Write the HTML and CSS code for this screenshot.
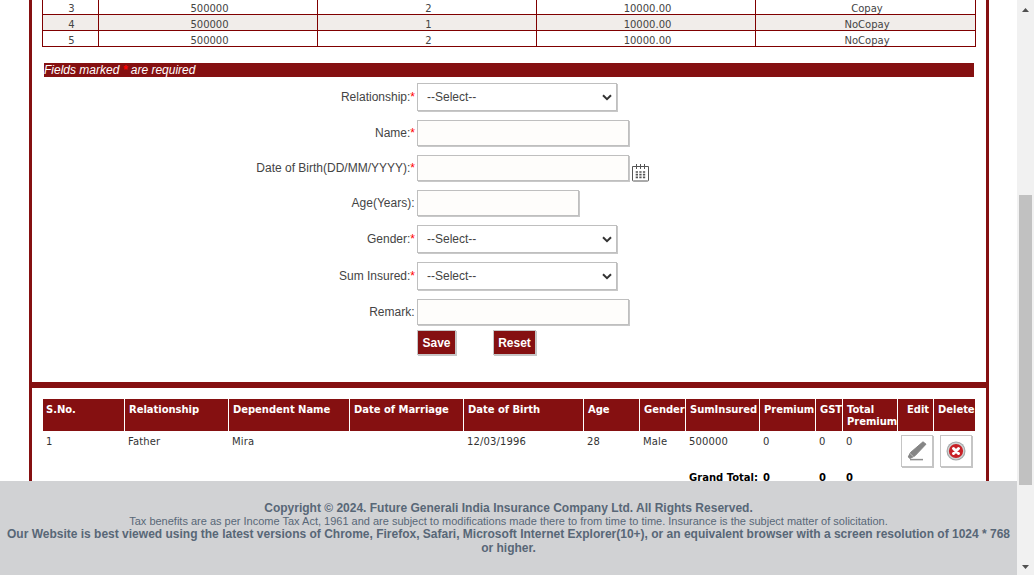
FILE: index.html
```html
<!DOCTYPE html>
<html lang="en">
<head>
<meta charset="utf-8">
<title>Dependent Details</title>
<link rel="stylesheet" href="styles.css">
</head>
<body>
<div class="window">
  <div class="page">
    <main class="panel">
      <section class="entry">
        <div class="plans">
          <div class="plan"><span>3</span><span>500000</span><span>2</span><span>10000.00</span><span>Copay</span></div>
          <div class="plan alt"><span>4</span><span>500000</span><span>1</span><span>10000.00</span><span>NoCopay</span></div>
          <div class="plan"><span>5</span><span>500000</span><span>2</span><span>10000.00</span><span>NoCopay</span></div>
        </div>
        <p class="note">Fields marked <b class="star">*</b> are required</p>
        <form class="form">
          <div class="row tall"><label>Relationship:<i>*</i></label><div class="select"><span>--Select--</span><svg width="10" height="7" viewBox="0 0 10 7"><path d="M1 1.3L5 5.2L9 1.3"/></svg></div></div>
          <div class="row"><label>Name:<i>*</i></label><div class="input"></div></div>
          <div class="row"><label>Date of Birth(DD/MM/YYYY):<i>*</i></label><div class="input"></div>
            <svg class="cal" width="17" height="18" viewBox="0 0 17 18"><path d="M.5 2.500h16v14q0 .5-1 .5h-14q-1 0-1-.5z"/><path d="M4.500 0v5M8.500 0v5M12.500 0v5"/><path class="dots" d="M3.700 8h9.500M3.700 10.700h9.500M3.700 13.400h9.500"/></svg>
          </div>
          <div class="row"><label class="plain">Age(Years):</label><div class="input short"></div></div>
          <div class="row tall"><label>Gender:<i>*</i></label><div class="select"><span>--Select--</span><svg width="10" height="7" viewBox="0 0 10 7"><path d="M1 1.3L5 5.2L9 1.3"/></svg></div></div>
          <div class="row tall"><label>Sum Insured:<i>*</i></label><div class="select"><span>--Select--</span><svg width="10" height="7" viewBox="0 0 10 7"><path d="M1 1.3L5 5.2L9 1.3"/></svg></div></div>
          <div class="row last"><label class="plain">Remark:</label><div class="input"></div></div>
          <div class="actions"><button type="button" class="save">Save</button><button type="button" class="reset">Reset</button></div>
        </form>
      </section>
      <section class="members">
        <div class="line head"><span>S.No.</span><span>Relationship</span><span>Dependent Name</span><span>Date of Marriage</span><span>Date of Birth</span><span>Age</span><span>Gender</span><span>SumInsured</span><span>Premium</span><span>GST</span><span>Total Premium</span><span class="edit">Edit</span><span>Delete</span></div>
        <div class="line data"><span>1</span><span>Father</span><span>Mira</span><span></span><span>12/03/1996</span><span>28</span><span>Male</span><span>500000</span><span>0</span><span>0</span><span>0</span>
          <div class="icon"><svg width="20" height="20" viewBox="0 0 20 20"><path d="M16 .8L19 3.200L8 14.800L3 17.500L1.200 16L3.500 11.500Z" fill="#858585" stroke="#858585"/><path d="M3 12.600l3.600 3.200" stroke="#ccc" stroke-width=".8"/><path d="M3 18.600h13" stroke="#8e8e8e" stroke-width="1.500"/></svg></div>
          <div class="icon del"><svg width="20" height="20" viewBox="0 0 20 20"><circle cx="10" cy="10" r="9.500" fill="#a3a7a8"/><circle cx="10" cy="10" r="8.400" fill="#d1d4d4"/><circle cx="10" cy="10" r="7.100" fill="#c82127"/><path d="M7.500 7.500l5 5M12.500 7.500l-5 5" stroke="#fff" stroke-width="3" stroke-linecap="round"/></svg></div>
        </div>
        <div class="line total"><span></span><span></span><span></span><span></span><span></span><span></span><span></span><span>Grand Total:</span><span>0</span><span>0</span><span>0</span></div>
      </section>
    </main>
    <footer class="footer">
      <p class="strong">Copyright © 2024. Future Generali India Insurance Company Ltd. All Rights Reserved.</p>
      <p class="tax">Tax benefits are as per Income Tax Act, 1961 and are subject to modifications made there to from time to time. Insurance is the subject matter of solicitation.</p>
      <p class="strong">Our Website is best viewed using the latest versions of Chrome, Firefox, Safari, Microsoft Internet Explorer(10+), or an equivalent browser with a screen resolution of 1024 * 768<br>or higher.</p>
    </footer>
  </div>
  <div class="scrollbar">
    <svg width="7" height="4" viewBox="0 0 7 4"><path d="M0 4L3.500 0L7 4Z"/></svg>
    <div class="thumb"></div>
    <svg width="7" height="4" viewBox="0 0 7 4"><path d="M0 0L3.500 4L7 0Z"/></svg>
  </div>
</div>
</body>
</html>
```
FILE: styles.css
```css
* { box-sizing: border-box; }
body { margin: 0; background: #fff; font-family: "Liberation Sans", Arial, sans-serif; font-size: 12px; color: #444; overflow: hidden; }
p { margin: 0; }
.window { display: flex; width: 1034px; height: 575px; }
.page { width: 1017px; height: 575px; display: flex; flex-direction: column; }
.panel { height: 481px; width: 960px; margin-left: 29px; border: solid #851011; border-width: 0 3px; }
.entry { height: 388px; border-bottom: 6px solid #851011; }

.plans { width: 934px; margin-left: 10px; border-left: 1px solid #800000; font: 10px/10px Verdana, "DejaVu Sans", sans-serif; text-align: center; }
.plan { display: grid; grid-template-columns: 56px 219px 219px 219px 220px; height: 16px; }
.plan:first-child { height: 15px; }
.plan:first-child span { padding-top: 4px; }
.plan span { border: solid #800000; border-width: 0 1px 1px 0; padding: 5px 0 0 3px; }
.plan span:first-child { padding-left: 2px; }
.alt { background: #f1edea; }

.note { width: 930px; height: 14px; margin: 16px 0 0 12px; background: #851011; color: #fff; font-style: italic; line-height: 14px; }
.star { color: #f00; }

.form { margin-top: 6px; }
.row { display: flex; height: 35px; align-items: flex-start; }
.row.tall { height: 37px; }
.row.last { height: 31px; }
.row label { width: 383px; margin-right: 2px; text-align: right; line-height: 26px; }
.row.tall label { line-height: 28px; }
.row .plain { padding-right: .5px; }
.row i { color: #f00; font-style: normal; }
.input, .select { border: 1px solid #bfbfbf; box-shadow: 1px 1px 0 #c8c8c8; }
.input { width: 212px; height: 26px; background: #fefdfb; }
.short { width: 162px; }
.select { width: 200px; height: 28px; padding: 0 4px 0 9px; display: flex; align-items: center; justify-content: space-between; background: #fff; }
.select path { fill: none; stroke: #333; stroke-width: 2; }
.cal { margin: 9px 0 0 3px; fill: none; stroke: #555; }
.cal .dots { stroke-width: 1.7; stroke-dasharray: 2.3 1.3; }
.actions { display: flex; margin-left: 385px; }
.actions button { height: 25px; padding: 0; border: 1px solid #c6c6c6; box-shadow: 1px 1px 0 #c6c6c6; background: #851011; color: #fff; font: bold 12px "Liberation Sans", Arial, sans-serif; }
.save { width: 39px; }
.reset { width: 43px; margin-left: 37px; }

.members { margin: 11px 0 0 11px; width: 932px; font: 10px/12px Verdana, "DejaVu Sans", sans-serif; color: #333; }
.line { display: grid; grid-template-columns: 82px 104px 121px 114px 120px 56px 46px 74px 56px 27px 55px 36px 41px; }
.head { height: 32px; color: #fff; font-weight: bold; letter-spacing: -.04px; }
.head span { background: #851011; border-right: 1px solid #fff; padding: 5px 0 0 4px; white-space: nowrap; }
.head span:first-child { padding-left: 3px; }
.head span:nth-child(11) { white-space: normal; }
.head span:last-child { border-right: 0; }
.head .edit { padding-left: 9px; }
.data { height: 36px; letter-spacing: .15px; }
.line:not(.head) span { padding: 5px 0 0 3px; white-space: nowrap; }
.icon { width: 32px; height: 32px; margin: 4px 0 0 3px; border: 1px solid #c5c5c5; box-shadow: 1px 1px 0 #c5c5c5; display: flex; align-items: center; justify-content: center; }
.del { margin-left: 6px; }
.total { color: #000; font-weight: bold; }

.footer { flex: 1; padding-top: 20px; background: #d1d2d4; color: #586777; text-align: center; white-space: nowrap; }
.strong { font-weight: bold; font-size: 12px; line-height: 14px; }
.tax { font-size: 11px; line-height: 12px; }

.scrollbar { width: 17px; background: #f1f1f1; display: flex; flex-direction: column; align-items: center; padding: 8px 0 6px; }
.scrollbar path { fill: #505050; }
.thumb { width: 13px; height: 290px; margin: 183px 0 auto; background: #c1c1c1; }
```
